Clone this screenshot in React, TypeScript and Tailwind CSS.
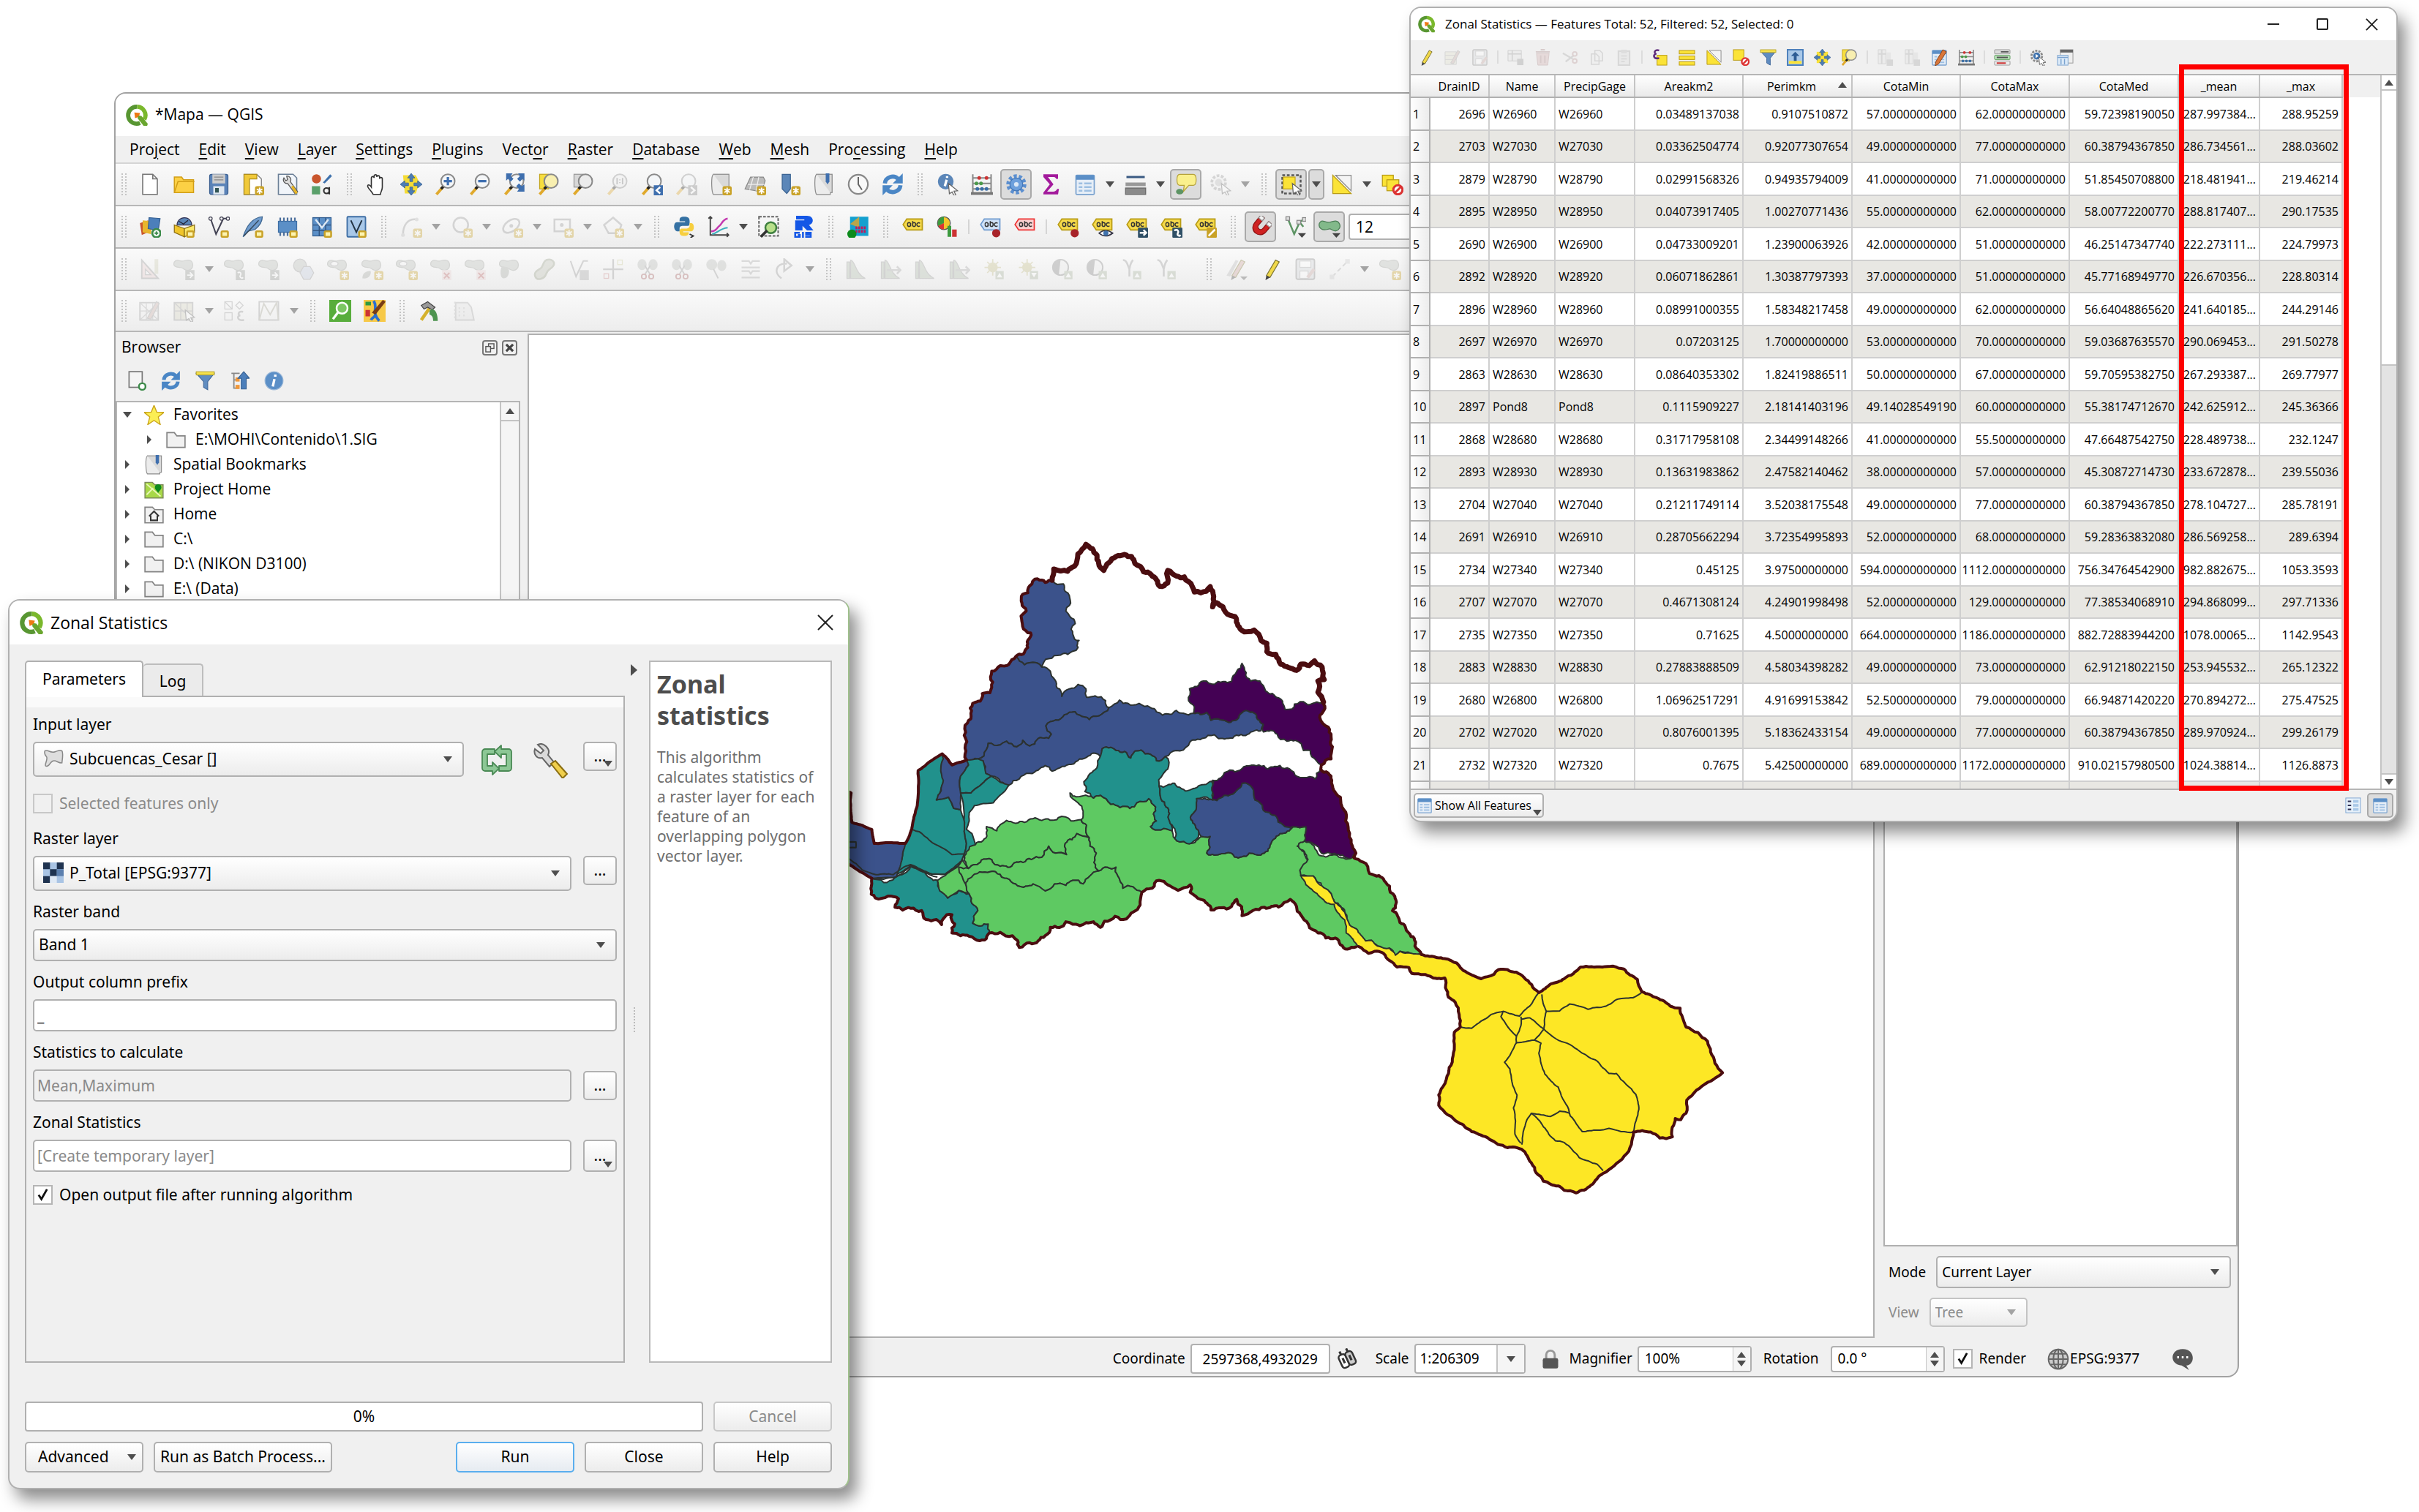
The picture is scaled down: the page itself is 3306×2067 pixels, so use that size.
import React from "react";

type Pt = [number, number];

/* ---------- Icons (24 x 24 grid) ---------- */

const gear = (
  <g>
    <rect x="14" y="14" width="10" height="10" rx="2" fill="#c9a227" />
    <path d="M19 15.5v7M16 17.2l6 3.6M22 17.2l-6 3.6" stroke="#fff" strokeWidth="1.5" />
  </g>
);
const plain = (
  <g>
    <rect x="14" y="16" width="9" height="8" rx="2" fill="#c9a227" />
    <rect x="16" y="18" width="5" height="4" fill="#fdf4b0" />
  </g>
);
const lens = (fill: string) => (
  <g>
    <path d="M2 23l7-8" stroke="#e0a92c" strokeWidth="3" />
    <path d="M7 17l3-3" stroke="#222" strokeWidth="3" />
    <circle cx="14.5" cy="8.5" r="7.5" fill={fill} stroke="#8a8a8a" strokeWidth="1.6" />
  </g>
);
const blob = <path d="M1 4c3-4 6 0 10-1s9-2 10 3-3 8-7 7-3-3-7-3S-1 9 1 4z" fill="#bcbfba" stroke="#9a9d98" />;
const tag = (fill: string, stroke: string) => (
  <g>
    <path d="M1 9.500l4-6h17v12H5z" fill={fill} stroke={stroke} strokeWidth="1.4" />
    <path d="M6 9.500a1.600 1.600 0 1 0 3 0a1.600 1.600 0 1 0-3 0M9.200 8v3.500M11.500 5.800v5.400M11.500 9.500a1.600 1.600 0 1 0 3 0a1.600 1.600 0 1 0-3 0M19.500 8.300a2 2 0 1 0 0 2.600" fill="none" stroke="#333" strokeWidth="1.200" />
  </g>
);
const pencil = (c: string) => (
  <g>
    <path d="M7 19L17 2l4 2-10 17z" fill={c} stroke="#7d7433" />
    <path d="M7 19l4 2-5 3z" fill="#444" />
  </g>
);
const cursor = <path d="M13 11l10 8-4 .5 2 4-2 .8-2-4-3 2z" fill="#fff" stroke="#666" strokeWidth="1" />;
const scissors = (
  <g>
    <ellipse cx="6" cy="7" rx="5" ry="6" fill="#b9bcb8" />
    <ellipse cx="18" cy="7" rx="5" ry="6" fill="#b9bcb8" />
    <path d="M9 8l6 10M15 8L9 18" stroke="#999" strokeWidth="1.500" />
    <circle cx="8" cy="20" r="2.500" fill="none" stroke="#a66" strokeWidth="1.500" />
    <circle cx="16" cy="20" r="2.500" fill="none" stroke="#a66" strokeWidth="1.500" />
  </g>
);
const histogram = <path d="M2 22V4h3v18zM6 22V2c5 0 5 15 16 20z" fill="#b3bfae" stroke="#999" />;
const tableSheet = (
  <g>
    <rect x="2" y="2" width="20" height="21" rx="1" fill="#e6eef7" stroke="#7ba3cf" strokeWidth="1.400" />
    <rect x="2" y="2" width="20" height="5" fill="#5b8fc7" />
    <path d="M5 11h4M11 11h8M5 15h4M11 15h8M5 19h4M11 19h8" stroke="#9dbfe2" strokeWidth="2" />
  </g>
);
const arrows4 = (
  <path d="M12 0l4 5h-2.500v4h-3V5H8zM12 24l4-5h-2.500v-4h-3v4H8zM0 12l5-4v2.500h4v3H5V16zM24 12l-5-4v2.500h-4v3h4V16z" fill="#4d7db5" stroke="#355f92" strokeWidth=".6" />
);
const abacus = (
  <g>
    <path d="M2 1v20M22 1v20M2 5h20M2 11h20M2 17h20" stroke="#888" strokeWidth="1.600" />
    <path d="M0 22h24" stroke="#777" strokeWidth="3" />
    <g fill="#c33"><circle cx="9" cy="5" r="2" /><circle cx="17" cy="5" r="2" /></g>
    <g fill="#4a9a4a"><circle cx="6" cy="11" r="2" /><circle cx="11" cy="11" r="2" /></g>
    <g fill="#3a6ea5"><circle cx="7" cy="17" r="2" /><circle cx="12" cy="17" r="2" /><circle cx="17" cy="17" r="2" /></g>
  </g>
);
const refresh = (
  <g fill="none" stroke="#4a86c5" strokeWidth="4.500">
    <path d="M3.500 11a8.500 8 0 0 1 14.500-5M20.500 13a8.500 8 0 0 1-14.500 5" />
    <path d="M23 0v11H12zM1 24V13h11z" fill="#4a86c5" stroke="none" />
  </g>
);
const funnel = (
  <g>
    <path d="M1 3h22l-8 10v10l-5-3v-7z" fill="#5f8cc0" stroke="#41699b" />
    <rect x="1" y="1" width="22" height="4" fill="#f4e04d" stroke="#b29e20" strokeWidth=".8" />
  </g>
);
const mapGrid = (
  <g>
    <rect x="2" y="2" width="20" height="20" fill="#5b8fc7" stroke="#335f92" />
    <path d="M2 10h20M2 16h20M9 2v20M16 2v20" stroke="#2d4e78" />
    <path d="M5 4l7 9 7-9" stroke="#dde8f4" strokeWidth="2" fill="none" />
  </g>
);
const noEntry = (
  <g>
    <circle cx="18" cy="18" r="5" fill="#fff" stroke="#d33" strokeWidth="2.400" />
    <path d="M15 21l6-6" stroke="#d33" strokeWidth="2.400" />
  </g>
);
const book = (
  <g>
    <rect x="4" y="1" width="17" height="20" fill="#d9d9d9" stroke="#8b8b8b" />
    <path d="M4 1c-3 2-2 20 0 22h15v-2" fill="#ececec" stroke="#8b8b8b" />
  </g>
);
const magicTri = (
  <g>
    <path d="M2 2v20h20z" fill="#fbe337" stroke="#b89b15" />
    <path d="M5 2h17v17z" fill="#f4f4f4" stroke="#8a8a8a" />
  </g>
);

const ICONS: Record<string, React.ReactNode> = {
  newFile: <path d="M4 1h11l5 5v17H4zM15 1v5h5" fill="#fff" stroke="#777" strokeWidth="1.300" />,
  open: <path d="M1 21V4h8l2 3h11v14zM1 21L5 9h18" fill="#fcd045" stroke="#d29e16" strokeWidth="1.200" />,
  save: (
    <g>
      <rect x="2" y="1" width="20" height="22" rx="2" fill="#5b83b8" stroke="#3b5f90" />
      <rect x="5" y="1" width="14" height="10" fill="#ccc" />
      <path d="M7 4h10M7 7h10" stroke="#888" />
      <rect x="6" y="14" width="12" height="9" fill="#dfe7f0" />
      <rect x="8" y="16" width="4" height="5" fill="#355" />
    </g>
  ),
  layout: (
    <g>
      <path d="M2 1h14l5 5v17H2z" fill="#fff" stroke="#777" />
      <path d="M2 1h14v5H8v17H2z" fill="#f0c93a" stroke="#b08f1c" />
      {gear}
    </g>
  ),
  layoutManager: (
    <g>
      <path d="M2 1h16l4 4v18H2z" fill="#f1f5fa" stroke="#6b7f96" strokeWidth="1.300" />
      <path d="M8 5a4 4 0 0 0 4 6l8 11 3-2-8-11a4 4 0 0 0-4-6l1 4-2 1z" fill="#ddd" stroke="#555" />
      <path d="M16 15l5 8 2-2-5-8z" fill="#e6b422" />
    </g>
  ),
  style: (
    <g>
      <circle cx="6" cy="6" r="5" fill="#c9552c" />
      <path d="M13 10l8-9 2 2-8 8z" fill="#3f72ad" />
      <rect x="1" y="14" width="9" height="9" fill="#5aa06a" />
      <path d="M20 23v-8M20 19a3 3 0 1 0-6 0a3 3 0 1 0 6 0" fill="none" stroke="#333" strokeWidth="1.700" />
    </g>
  ),
  hand: (
    <path d="M8 23c-2-4-6-7-6-9s2-2 4 1V5c0-2 3-2 3 0V3c0-2 3-2 3 0v1c0-2 3-2 3 0v2c0-2 3-2 3 0v9c0 4-2 5-2 8z" fill="#fff" stroke="#333" strokeWidth="1.300" />
  ),
  pan: (<g><path d="M3 2h14l4 8-4 12H5z" fill="#f5dc35" />{arrows4}</g>),
  zoomIn: (<g>{lens("#f4f6f8")}<path d="M10 8.500h9M14.500 4v9" stroke="#3f6fb0" strokeWidth="2.600" /></g>),
  zoomOut: (<g>{lens("#f4f6f8")}<path d="M10 8.500h9" stroke="#3f6fb0" strokeWidth="2.600" /></g>),
  zoomFull: (<g>{lens("#f4f6f8")}<path d="M3 0h7L8 3l3 3-3 3-3-3-2 2zM23 0h-7l2 3-3 3 3 3 3-3 2 2zM23 20h-8l2-3-3-3 3-3 3 3 3-2z" fill="#3f6fae" /></g>),
  zoomSel: (<g><rect x="2" y="1" width="10" height="16" fill="#f7de3e" stroke="#c5a71c" />{lens("#f8efb0")}</g>),
  zoomLayer: (<g><rect x="2" y="1" width="10" height="14" fill="#d8d8d8" stroke="#999" />{lens("#ececec")}</g>),
  zoomNative: (<g>{lens("#eee")}<path d="M11.500 5v7M17.500 5v7M14.500 6.500v1M14.500 9.500v1" stroke="#777" strokeWidth="1.500" /></g>),
  zoomLast: (<g>{lens("#f4f6f8")}<rect x="14" y="13" width="10" height="11" fill="#3f6fae" /><path d="M21 15l-4 3.500 4 3.500" stroke="#fff" strokeWidth="2" fill="none" /></g>),
  zoomNext: (<g>{lens("#f4f6f8")}<rect x="14" y="13" width="10" height="11" fill="#888" /><path d="M17 15l4 3.500-4 3.500" stroke="#fff" strokeWidth="2" fill="none" /></g>),
  newMap: (<g>{book}{gear}</g>),
  new3d: (<g><path d="M1 17L7 4h14l2 4-4 12z" fill="#bbb" stroke="#888" /><path d="M4 12h18M10 4L6 18M16 4l-3 15" stroke="#eee" />{gear}</g>),
  newBookmark: (<g><path d="M4 1h9v16l-4 5-5-5z" fill="#5b86b8" stroke="#3c6493" />{gear}</g>),
  bookmark: (<g>{book}<path d="M14 0h4v9l-2 3-2-3z" fill="#3f6fae" /></g>),
  clock: (<g><circle cx="12" cy="12" r="10.500" fill="#f8f8f8" stroke="#888" strokeWidth="1.800" /><path d="M12 4v8l4 6" fill="none" stroke="#666" strokeWidth="1.600" /></g>),
  refresh,
  identify: (<g><circle cx="10" cy="9" r="8.500" fill="#5b86b8" /><path d="M11 7l-2 7M11.500 3v2" stroke="#fff" strokeWidth="2.600" />{cursor}</g>),
  abacus,
  cog: (
    <g>
      <circle cx="12" cy="12" r="8.500" fill="none" stroke="#5b8fd0" strokeWidth="5" strokeDasharray="3.200 2.100" />
      <circle cx="12" cy="12" r="7" fill="#6ea0dc" stroke="#4377b8" />
      <circle cx="12" cy="12" r="2.500" fill="#dce8f6" />
    </g>
  ),
  sigma: <path d="M4 1h16v5h-2c-1-2-2-2-4-2H9l6 8-7 8h6c3 0 4-1 5-3h2l-1 6H4v-2l7-9-7-8z" fill="#a31b9c" />,
  table: tableSheet,
  measure: (<g><path d="M2 4h20" stroke="#3a5a82" strokeWidth="2.500" /><rect x="1" y="10" width="22" height="4" fill="#999" /><rect x="1" y="16" width="22" height="7" fill="#8a8a8a" stroke="#666" /></g>),
  tip: (<g><path d="M5 1h15c4 0 4 12 0 12h-5l-6 7 1-7H5c-4 0-4-12 0-12z" fill="#faf08c" stroke="#b5a23a" /><ellipse cx="5" cy="20" rx="4" ry="3" fill="#5d9464" /></g>),
  cogRun: (<g><circle cx="10" cy="10" r="7.500" fill="#eee" stroke="#999" strokeWidth="3" strokeDasharray="3 1.700" /><circle cx="10" cy="10" r="4" fill="#bbb" />{cursor}</g>),
  cogRunBlue: (<g><circle cx="10" cy="10" r="7.500" fill="#eee" stroke="#8a8a8a" strokeWidth="3" strokeDasharray="3 1.700" /><circle cx="10" cy="10" r="5" fill="#3f72ad" /><path d="M8.500 7v6l4-3z" fill="#fff" />{cursor}</g>),
  select: (<g><rect x="2" y="2" width="20" height="20" fill="none" stroke="#555" strokeWidth="2" strokeDasharray="3 2" /><rect x="3" y="4" width="13" height="13" fill="#fbe337" stroke="#c5a71c" />{cursor}</g>),
  magicTri,
  deselect: (<g><rect x="1" y="2" width="12" height="12" fill="#fbe337" stroke="#b89b15" /><rect x="6" y="7" width="13" height="12" fill="#fbe337" stroke="#b89b15" />{noEntry}</g>),
  deselectOne: (<g><rect x="1" y="1" width="15" height="15" fill="#fbe337" stroke="#b89b15" />{noEntry}</g>),
  dataSource: (<g><path d="M1 8l9-3v13l-7 3z" fill="#c9552c" /><path d="M4 5l10 1-1 14-9-2z" fill="#e8b52c" /><path d="M11 2l12 1-2 13-11-2z" fill="#4c7fbb" stroke="#345f92" /><circle cx="19" cy="19" r="4.500" fill="#fff" stroke="#3d8b4a" strokeWidth="2.200" /><path d="M19 17v4M17 19h4" stroke="#3d8b4a" strokeWidth="1.500" /></g>),
  geopackage: (<g><path d="M4 10a8 8 0 0 1 16 0z" fill="#5b86b8" stroke="#335" /><path d="M1 10l11 4v9L1 18z" fill="#f0c52b" stroke="#8a6d10" /><path d="M23 10l-11 4v9l11-5z" fill="#fbe869" stroke="#8a6d10" /><path d="M6 6l5 3 5-4" stroke="#223" fill="none" />{plain}</g>),
  shapefile: (<g><path d="M3 3l6 17 8-17h5" fill="none" stroke="#445" strokeWidth="1.600" /><g fill="#fff" stroke="#445"><circle cx="3" cy="3" r="1.800" /><circle cx="15" cy="3" r="1.800" /><circle cx="22" cy="3" r="1.800" /></g>{plain}</g>),
  feather: (<g><path d="M1 23C5 10 12 2 22 1c0 6-3 10-8 14l-8 2z" fill="#6f9bcc" stroke="#3d658f" /><path d="M2 22L18 5" stroke="#345" />{plain}</g>),
  memory: (<g><path d="M4 2v5M8 2v5M12 2v5M16 2v5M20 2v5M4 22v-5M8 22v-5M12 22v-5" stroke="#4c6f9c" strokeWidth="1.800" /><rect x="2" y="6" width="20" height="12" fill="#5b8fc7" stroke="#3f6fa5" />{plain}</g>),
  mesh: (<g>{mapGrid}{plain}</g>),
  virtual: (<g><rect x="2" y="1" width="20" height="22" rx="1" fill="#a9c8e8" stroke="#3f6fa5" strokeWidth="1.500" /><path d="M6 5l6 13 6-13" fill="none" stroke="#234" strokeWidth="1.500" />{plain}</g>),
  arc: (<g><path d="M3 21C3 9 9 3 18 4" fill="none" stroke="#999" strokeWidth="2" /><circle cx="3" cy="21" r="2" fill="#bbb" /><circle cx="18" cy="4" r="2" fill="#bbb" />{gear}</g>),
  circleD: (<g><circle cx="11" cy="10" r="8" fill="none" stroke="#999" strokeWidth="2" />{gear}</g>),
  ellipseD: (<g><ellipse cx="11" cy="11" rx="10" ry="6" transform="rotate(-35 11 11)" fill="none" stroke="#999" strokeWidth="2" /><circle cx="11" cy="11" r="2" fill="#999" />{gear}</g>),
  rectD: (<g><rect x="3" y="4" width="17" height="13" fill="none" stroke="#999" strokeWidth="2" /><circle cx="11" cy="10" r="2" fill="#999" />{gear}</g>),
  polyD: (<g><path d="M12 2l9 8-3 9H7L2 10z" fill="none" stroke="#999" strokeWidth="2" />{gear}</g>),
  python: (<g><path d="M12 1c-5 0-5 2-5 5h6v1H4c-4 0-4 9 0 10h3v-3c0-3 2-3 5-3h4c2 0 2-2 2-5 0-4-2-5-6-5z" fill="#3571a3" /><path d="M12 22c5 0 5-2 5-4h-6v-1h9c4-1 3-9 0-9h-2v3c0 2-2 3-4 3h-4c-3 0-3 2-3 4 0 3 2 4 5 4z" fill="#f7cf3f" /><path d="M18 20l4 2-3 2" stroke="#333" fill="none" strokeWidth="1.500" /></g>),
  plot: (<g><path d="M3 1v20h20M1 3l2-2 2 2M21 19l2 2-2 2" fill="none" stroke="#444" strokeWidth="1.500" /><path d="M4 17c6 0 6-4 9-6s3-7 9-8" fill="none" stroke="#c43ab0" strokeWidth="2" /><path d="M5 20c6-1 8-6 17-7" fill="none" stroke="#3db0bc" strokeWidth="1.800" /></g>),
  mapSearch: (<g><rect x="1" y="1" width="21" height="21" fill="#f6f6f6" stroke="#666" strokeDasharray="3 1.500" strokeWidth="1.600" /><circle cx="14" cy="13" r="6" fill="#b8e08a" stroke="#3f8040" strokeWidth="2" /><path d="M3 23l7-7" stroke="#333" strokeWidth="3" /></g>),
  rgis: (<g><path d="M4 0h12c8 0 8 9 2 10l5 6h-7l-5-5v5H3V5h10V4H4z" fill="#1457e6" /><path d="M8 18.500H3v4.500h5v-2H6M11.500 17.500V24M21 18.500h-6v2h5v2.500h-6" fill="none" stroke="#1457e6" strokeWidth="2" /></g>),
  cadastre: (<g><rect x="3" y="1" width="20" height="21" fill="#14a0cf" /><path d="M3 9l10-8v12z" fill="#b9a54a" /><path d="M9 13h12M9 17h12" stroke="#c2185b" strokeWidth="3" strokeDasharray="2 1" /><circle cx="5" cy="20" r="5" fill="#0d8a1c" /></g>),
  label: tag("#f6da4a", "#b89b15"),
  labelPie: (<g><circle cx="8" cy="8" r="7" fill="#f2c52c" stroke="#555" /><path d="M8 8V1a7 7 0 0 0-6 10z" fill="#3c9a3e" /><path d="M8 8l-6 3a7 7 0 0 0 6 4z" fill="#d33" /><rect x="12" y="11" width="4" height="12" fill="#3c9a3e" /><rect x="17" y="15" width="5" height="8" fill="#c33" /></g>),
  labelBlue: (<g>{tag("#cfe2f7", "#6f9bd0")}<circle cx="18" cy="19" r="4.500" fill="#a8242a" /></g>),
  labelRed: tag("#fbd0d0", "#e33"),
  labelPin: (<g>{tag("#f6da4a", "#b89b15")}<circle cx="19" cy="19" r="4.500" fill="#a8242a" /></g>),
  labelEye: (<g>{tag("#f6da4a", "#b89b15")}<path d="M8 19q7-6 15 0q-8 6-15 0z" fill="#fff" stroke="#334" strokeWidth="1.300" /><circle cx="15.500" cy="19" r="2.800" fill="#3f72ad" /></g>),
  labelMove: (<g>{tag("#f6da4a", "#b89b15")}<rect x="13" y="13" width="11" height="11" rx="1" fill="#2f4f66" /><path d="M15 18.500h7M19 15.500l3 3-3 3" stroke="#fff" strokeWidth="2" fill="none" /></g>),
  labelRotate: (<g>{tag("#f6da4a", "#b89b15")}<rect x="13" y="13" width="11" height="11" rx="1" fill="#2f4f66" /><path d="M15 16c4-2 5 1 4 3s1 4 3 2" stroke="#fff" strokeWidth="2" fill="none" /></g>),
  labelEdit: (<g>{tag("#f6da4a", "#b89b15")}<rect x="13" y="13" width="11" height="11" rx="1" fill="#c9a227" /><path d="M15 22l7-7" stroke="#fff" strokeWidth="2" /></g>),
  magnet: (<g transform="rotate(40 12 12)"><path d="M4 2h5v10a3 3 0 0 0 6 0V2h5v11a8 8 0 0 1-16 0z" fill="#cf2222" stroke="#8d1111" /><path d="M4 2h5v4H4zM15 2h5v4h-5z" fill="#f4f4f4" stroke="#999" /></g>),
  snapV: (<g><path d="M4 3l7 17 6-13M17 7l4-3M17 7l4 5" fill="none" stroke="#5d9464" strokeWidth="2" /><g fill="#ddd" stroke="#888"><rect x="2" y="1" width="4" height="4" /><rect x="14" y="5" width="4" height="4" /><rect x="20" y="2" width="4" height="4" /></g><path d="M15 19h9l-4.500 5z" fill="#444" /></g>),
  snapBlob: (<g><path d="M1 8c3-5 6 0 11-1s9-3 11 2-3 9-7 7-3-2-7-1-10-1-8-7z" fill="#82b98a" stroke="#4b7d55" /><path d="M15 19h9l-4.500 5z" fill="#444" /></g>),
  ruler: (<g><path d="M3 2v20h18z" fill="#e8cfcf" stroke="#999" strokeWidth="1.500" /><path d="M7 12v6h6z" fill="#f6f6f6" stroke="#999" /><rect x="17" y="1" width="4" height="16" fill="#cfcfb5" /></g>),
  blobMove: (<g>{blob}<rect x="13" y="13" width="10" height="11" fill="#9a9d98" /><path d="M15 18.500h6M18 15.500l3 3-3 3" stroke="#fff" strokeWidth="1.500" fill="none" /></g>),
  blobRotate: (<g>{blob}<rect x="13" y="13" width="10" height="11" fill="#9a9d98" /><path d="M15 16c4-2 4 2 3 3s1 4 3 2" stroke="#fff" strokeWidth="1.500" fill="none" /></g>),
  blobHex: (<g><circle cx="8" cy="8" r="7" fill="#bcbfba" stroke="#999" /><path d="M12 9h7l4 7-4 7h-7l-4-7z" fill="#c5cede" stroke="#999" /></g>),
  blobRing: (<g>{blob}<ellipse cx="8" cy="6" rx="4" ry="2.500" fill="#f6f6f6" stroke="#999" />{gear}</g>),
  blobPart: (<g>{blob}<path d="M1 22c0-6 4-8 9-8 1 4-2 9-9 8z" fill="#a9aca6" />{gear}</g>),
  blobGear: (<g>{blob}{gear}</g>),
  blobX: (<g>{blob}<rect x="13" y="13" width="10" height="11" fill="#e8d2d2" /><path d="M15 16l6 6M21 16l-6 6" stroke="#b66" strokeWidth="1.500" /></g>),
  blobFill: (<g>{blob}<path d="M3 9c3 0 8 1 8 5s-2 8-6 8-4-9-2-13z" fill="#a9aca6" /></g>),
  blobOffset: (<path d="M14 2c6-2 10 2 8 6s-6 3-8 9-10 8-12 3 3-7 6-9 2-7 6-9z" fill="#bfc2b5" stroke="#99a08a" strokeWidth="2" />),
  vertexS: (<g><path d="M3 3l6 17 8-17h5" fill="none" stroke="#999" strokeWidth="1.600" /><rect x="13" y="13" width="10" height="11" fill="#aaa" /></g>),
  crossEdge: (<g><path d="M12 1v22M1 12h22" stroke="#999" strokeWidth="1.800" /><rect x="2" y="17" width="5" height="5" fill="none" stroke="#c88" /><rect x="17" y="2" width="5" height="5" fill="none" stroke="#cc9" /></g>),
  scissors,
  mergeD: (<g><ellipse cx="7" cy="7" rx="6" ry="6" fill="#b9bcb8" /><ellipse cx="18" cy="8" rx="5" ry="6" fill="#b9bcb8" /><path d="M9 12l5 10" stroke="#999" strokeWidth="1.500" /></g>),
  mergeLines: <path d="M2 3h8l2 3 2-3h8M2 10h20M2 14h8l2 3 2-3h8M2 21h20" fill="none" stroke="#a9a9a9" strokeWidth="1.800" />,
  swirl: <path d="M8 22c-9-6-6-17 6-16M11 1l8 7-8 6z" fill="none" stroke="#999" strokeWidth="2" />,
  hist1: histogram,
  hist2: (<g>{histogram}<path d="M8 13h14M19 9l4 4-4 4" stroke="#aaa" strokeWidth="2" fill="none" /></g>),
  sunUp: (<g><circle cx="11" cy="10" r="5.500" fill="#c5bf8a" /><path d="M11 1v18M2 10h18M5 4l12 12M17 4L5 16" stroke="#c5bf8a" strokeWidth="1.400" /><rect x="14" y="14" width="9" height="9" fill="#aab5a0" /><path d="M18.500 16l3 5h-6z" fill="#fff" /></g>),
  sunDown: (<g><circle cx="11" cy="10" r="5.500" fill="#c5bf8a" /><path d="M11 1v18M2 10h18M5 4l12 12M17 4L5 16" stroke="#c5bf8a" strokeWidth="1.400" /><rect x="14" y="14" width="9" height="9" fill="#aab5a0" /><path d="M18.500 21l3-5h-6z" fill="#fff" /></g>),
  contrast: (<g><circle cx="10" cy="10" r="8.500" fill="#eee" stroke="#888" strokeWidth="1.500" /><path d="M10 1.500a8.500 8.500 0 0 0-2 16.800z" fill="#888" /><rect x="14" y="14" width="9" height="9" fill="#aab5a0" /><path d="M18.500 16l3 5h-6z" fill="#fff" /></g>),
  gammaUp: (<g><path d="M3 2c4 0 5 5 7 10 1-6 2-8 4-10M10 12v8" fill="none" stroke="#999" strokeWidth="2" /><rect x="14" y="14" width="9" height="9" fill="#aab5a0" /><path d="M18.500 16l3 5h-6z" fill="#fff" /></g>),
  pencils: (<g>{pencil("#cfa6a0")}<path d="M1 19L11 2l3 1L5 20z" fill="#bbb" /><path d="M16 20h8l-4 4z" fill="#555" /></g>),
  pencil: pencil("#f1d94a"),
  saveGrey: (<g><rect x="2" y="1" width="20" height="22" rx="2" fill="#d5d8dc" stroke="#888" strokeWidth="1.500" /><rect x="6" y="3" width="12" height="7" fill="#fff" stroke="#aaa" /><rect x="6" y="14" width="9" height="8" fill="#fff" stroke="#aaa" /><path d="M13 20l7-9 3 2-7 9z" fill="#c9a9a5" /></g>),
  lineDots: (<g><path d="M4 20L20 4" stroke="#aaa" strokeWidth="1.500" strokeDasharray="5 3" /><rect x="1" y="18" width="5" height="5" fill="#ccc" /><rect x="18" y="1" width="5" height="5" fill="#ccc" /></g>),
  gridEdit: (<g><rect x="1" y="3" width="20" height="19" fill="#f0f0f0" stroke="#999" strokeWidth="1.500" /><path d="M1 12h20M8 3v19M15 3v19M1 3l20 19M21 3L1 22" stroke="#aaa" /><path d="M9 20L19 2l3 2-9 17z" fill="#cbb0aa" stroke="#999" /></g>),
  gridSelect: (<g><rect x="1" y="3" width="20" height="19" fill="#d8d6c4" stroke="#999" strokeWidth="1.500" /><path d="M1 12h20M8 3v19M15 3v19M1 3l20 19" stroke="#999" />{cursor}</g>),
  gridE: (<g><rect x="1" y="2" width="8" height="8" fill="none" stroke="#999" /><path d="M1 2l8 8M13 6l4-4 4 4-4 4z" stroke="#999" fill="none" /><rect x="1" y="14" width="8" height="8" fill="none" stroke="#999" /><path d="M21 13c-6-1-6 4-3 4-4 0-4 6 4 5" fill="none" stroke="#999" strokeWidth="2" /></g>),
  gridV: (<g><rect x="1" y="2" width="21" height="20" fill="none" stroke="#999" strokeWidth="1.500" /><path d="M1 22L6 4l7 12 7-13 2 19" fill="none" stroke="#aaa99a" strokeWidth="1.500" /></g>),
  greenSearch: (<g><rect width="24" height="24" fill="#58ad3c" /><circle cx="14" cy="9" r="6" fill="#7cc764" stroke="#fff" strokeWidth="2" /><path d="M4 21l6-8" stroke="#fff" strokeWidth="2.600" /></g>),
  mapPen: (<g><rect width="24" height="24" fill="#f7c948" /><path d="M2 2h6v4H2z" fill="#2e9a3e" /><path d="M2 11h5v7H2z" fill="#c33" /><path d="M11 1c5 8-3 12 6 22M8 22c2-4 4-2 5-6" stroke="#2a6fd0" strokeWidth="3" fill="none" /><path d="M9 14L21 0l3 2-11 14z" fill="#7a3d14" /></g>),
  hammer: (<g><path d="M3 22l9-13" stroke="#d5b22d" strokeWidth="3.600" /><path d="M3 6l7-4 8 6-3 3-5-3-4 2z" fill="#999" stroke="#444" /><path d="M12 12c4-4 9 0 9 11h-5c0-4-1-6-4-7z" fill="#4e9450" /></g>),
  mapGrey: (<g><path d="M3 3h13l4 5 3 14H3z" fill="#e2e2e2" stroke="#aaa" strokeWidth="1.500" /><path d="M7 8v10M12 8v10M2 2v20" stroke="#bbb" strokeDasharray="2 2" strokeWidth="1.500" /></g>),
  addLayer: (<g><rect x="3" y="1" width="16" height="19" fill="#f4f4f4" stroke="#777" strokeWidth="1.500" /><circle cx="19" cy="19" r="4" fill="#fff" stroke="#3d8b4a" strokeWidth="2.200" /></g>),
  funnel,
  collapse: (<g><path d="M2 3h10M5 3v18h6M5 11h5" fill="none" stroke="#888" strokeWidth="1.600" /><rect x="7" y="8" width="5" height="5" fill="#f0973a" /><rect x="7" y="17" width="5" height="5" fill="#f0973a" /><path d="M17 1l7 8h-4v13h-6V9h-4z" fill="#4c7fbb" stroke="#345f92" /></g>),
  info: (<g><circle cx="12" cy="12" r="11" fill="#5b8fc7" stroke="#9cb9d8" /><path d="M12.500 10l-2 9M13.500 4.500v2.500" stroke="#fff" strokeWidth="3" /></g>),
  star: <path d="M12 0l3.300 8.300 8.700.4-6.800 5.600 2.400 9.200L12 18.400l-7.600 5.100 2.400-9.200L0 8.700l8.700-.4z" fill="#fbee54" stroke="#c9a31a" strokeWidth="1.200" />,
  folder: <path d="M1 21V3h9l3 4h10v14z" fill="#f1f1f1" stroke="#858585" strokeWidth="1.500" />,
  folderMap: (<g><path d="M1 22V3h9l3 3h10v16z" fill="#a8d848" stroke="#7d8a5c" strokeWidth="1.300" /><path d="M3 5l17 15M3 18l8-8" stroke="#e9f7b8" strokeWidth="1.600" /><path d="M13 9c0-5 8-5 8 0 0 3-3 4-4 7-1-3-4-4-4-7z" fill="#0e8a1e" /></g>),
  folderHome: (<g><path d="M1 22V3h9l3 3h10v16z" fill="#f1f1f1" stroke="#858585" strokeWidth="1.500" /><path d="M6 14l6-6 6 6M8 13v6h8v-6" fill="none" stroke="#333" strokeWidth="1.800" /></g>),
  tableEdit: (<g><path d="M1 4h16v18H1z" fill="#e4e2cf" stroke="#aaa" /><path d="M1 9h16M1 15h16" stroke="#aaa" /><path d="M9 20L19 2l3 2-9 17z" fill="#cbb0aa" stroke="#999" /></g>),
  tableAdd: (<g><path d="M1 2h19v15H1z" fill="#e5e5e5" stroke="#999" /><path d="M1 7h19M7 2v15" stroke="#999" strokeWidth="1.500" /><rect x="14" y="14" width="9" height="9" fill="#999" /></g>),
  trash: (<g><path d="M3 6h18l-2 17H5z" fill="#d6b4b4" stroke="#a88" /><path d="M2 4h20M9 1h6M9 9v11M15 9v11" stroke="#a88" strokeWidth="2" /></g>),
  cut: (<g><path d="M2 6l14 8M6 18l12-9" stroke="#aaa" strokeWidth="2.400" /><circle cx="19" cy="7" r="3" fill="none" stroke="#b99" strokeWidth="2" /><circle cx="19" cy="17" r="3" fill="none" stroke="#b99" strokeWidth="2" /></g>),
  copy: <path d="M9 2h7l4 4v11H9zM4 7h7l4 4v11H4z" fill="#eee" stroke="#aaa" strokeWidth="1.600" />,
  paste: (<g><rect x="4" y="3" width="16" height="20" fill="#ddd" stroke="#aaa" strokeWidth="2" /><rect x="8" y="1" width="8" height="5" fill="#bbb" /><path d="M8 10h8M8 14h8M8 18h5" stroke="#aaa" strokeWidth="1.500" /></g>),
  exprSelect: (<g><rect x="8" y="9" width="14" height="14" fill="#fbe337" stroke="#b89b15" /><path d="M11 2C4 0 3 6 7 7c-5 0-5 8 4 6" fill="none" stroke="#5d2a7a" strokeWidth="2.600" /></g>),
  selectAll: (<g fill="#fbe337" stroke="#b89b15"><rect x="1" y="2" width="22" height="5" /><rect x="1" y="10" width="22" height="5" /><rect x="1" y="18" width="22" height="5" /></g>),
  moveTop: (<g><rect x="1" y="1" width="22" height="22" fill="#a9c8e8" stroke="#4c7fbb" strokeWidth="2" /><rect x="3" y="17" width="18" height="4" fill="#fbe337" /><path d="M12 4l6 6h-4v7h-4v-7H6z" fill="#2d5c94" /></g>),
  panSel: (<g><rect x="4" y="4" width="16" height="16" fill="#fbe337" />{arrows4}</g>),
  colAdd: (<g><path d="M2 1h11v20H2z" fill="#e2e2e2" stroke="#aaa" /><path d="M7 1v20M2 7h11" stroke="#aaa" strokeWidth="2" /><rect x="14" y="5" width="6" height="14" fill="#d5d5d5" /><rect x="14" y="15" width="9" height="9" fill="#aaa" /></g>),
  tablePencil: (<g>{tableSheet}<path d="M7 18L17 1l5 3-11 17-5 3z" fill="#d9763a" stroke="#8a4318" /></g>),
  forms: (<g><rect x="1" y="1" width="22" height="6" rx="1" fill="#ddd" stroke="#999" /><rect x="1" y="9" width="22" height="6" rx="1" fill="#bfe5bf" stroke="#5fa05f" /><rect x="1" y="17" width="22" height="6" rx="1" fill="#eee" stroke="#999" /><path d="M10 4h11M4 12h16" stroke="#555" strokeWidth="2" /><path d="M4 20h13" stroke="#c33" strokeWidth="2" /></g>),
  dock: (<g><rect x="5" y="1" width="18" height="19" fill="#eee" stroke="#999" /><rect x="5" y="1" width="18" height="4" fill="#666" /><rect x="1" y="9" width="15" height="14" fill="#dceaf8" stroke="#7ba3cf" /><path d="M1 12h15M6 14v8M11 14v8" stroke="#7ba3cf" strokeWidth="1.500" /></g>),
  formView: (<g><rect x="1" y="1" width="22" height="22" fill="#e6f0fa" stroke="#7ba3cf" /><path d="M4 6h5M4 12h5M4 18h5" stroke="#335" strokeWidth="2" /><rect x="12" y="4" width="8" height="4" fill="#a9c8e8" /><rect x="12" y="10" width="8" height="4" fill="#a9c8e8" /><rect x="12" y="16" width="8" height="4" fill="#a9c8e8" /></g>),
  polygonLayer: <path d="M2 3c4-2 6 3 12 1s6-2 8-1c2 3 0 12 0 14-4 1-7-4-11-2s-3 6-7 6C0 21 6 13 4 10 2 8 1 6 2 3z" fill="#dedede" stroke="#888" strokeWidth="1.300" />,
  rasterLayer: (<g><rect width="24" height="24" fill="#a9c4e4" /><path d="M0 0h8v8H0zM8 8h8v8H8zM0 16h8v8H0zM16 0h8v8h-8z" fill="#1f3350" /><path d="M16 8h8v8h-8z" fill="#5b7fae" /><path d="M8 16h8v8H8z" fill="#dfe9f5" /></g>),
  cycle: (
    <g fill="#8cc795" stroke="#4a8a55" strokeWidth=".9" strokeLinejoin="round">
      <path d="M10.500 4.500v3.500H5.500v8H9V13.500l4.500 4.300L9 22v-2.500H4A2 2 0 0 1 2 17.500v-11a2 2 0 0 1 2-2z" />
      <path d="M13.500 19.500V16h5V8H15v2.500L10.500 6.200 15 2v2.500h5a2 2 0 0 1 2 2v11a2 2 0 0 1-2 2z" />
    </g>
  ),
  wrench: (<g><path d="M3 1c4-2 9 3 7 7l4 5-3 3-5-6C2 11 0 7 1 4l4 3 2-2z" fill="#d9d9d9" stroke="#666" /><path d="M12 14l3-2 8 9-3 3z" fill="#f0cf4c" stroke="#8a6d10" /></g>),
  tracker: (<g transform="rotate(-25 12 12)"><rect x="4" y="5" width="8" height="15" rx="3" fill="#fff" stroke="#333" strokeWidth="2" /><rect x="12" y="5" width="8" height="15" rx="3" fill="#ccc" stroke="#333" strokeWidth="2" /><path d="M8 5V1M16 5V1M8 9v6M16 9v6" stroke="#333" strokeWidth="2.500" /></g>),
  lock: (<g><path d="M7 12V7a5 5 0 0 1 10 0v5" fill="none" stroke="#999" strokeWidth="2.500" /><rect x="3" y="11" width="18" height="12" rx="2" fill="#555" /></g>),
  globe: (<g fill="none" stroke="#666" strokeWidth="1.500"><circle cx="12" cy="12" r="10" fill="#ccc" /><ellipse cx="12" cy="12" rx="5" ry="10" /><path d="M12 2v20M2 12h20M4 6.500h16M4 17.500h16" /></g>),
  chat: (<g><path d="M12 1c14 0 14 17 4 18l3 5-8-5C-3 18-2 1 12 1z" fill="#555" /><path d="M6 10h2M11 10h2M16 10h2" stroke="#fff" strokeWidth="2.500" /></g>),
};

function Icon({ name, className = "size-[30px]", dim }: { name: string; className?: string; dim?: boolean }) {
  return (
    <svg viewBox="0 0 24 24" fill="none" aria-hidden="true" className={`shrink-0 ${className} ${dim ? "opacity-35" : ""}`}>
      {ICONS[name]}
    </svg>
  );
}

function QgisLogo({ className }: { className: string }) {
  return (
    <svg viewBox="0 0 32 32" className={`shrink-0 ${className}`} fill="none" aria-hidden="true">
      <path d="M16 4a12 12 0 1 0 4 23" stroke="#589632" strokeWidth="6" />
      <path d="M16 4a12 12 0 0 1 10 18" stroke="#7ab82c" strokeWidth="6" />
      <path d="M16 16l6 1 9 11-1 3h-5l-8-10z" fill="#6aa62f" />
      <path d="M12 12l8 1-1 3-3 3-3 1z" fill="#ee7913" />
    </svg>
  );
}

/* ---------- Small shared parts ---------- */

function Caret({ dim, className = "" }: { dim?: boolean; className?: string }) {
  return (
    <svg viewBox="0 0 12 8" aria-hidden="true" className={`h-2 w-3 shrink-0 ${className}`}>
      <path d="M0 0h12L6 8z" fill={dim ? "#a3a3a3" : "#4d4d4d"} />
    </svg>
  );
}

function TreeArrow({ open }: { open?: boolean }) {
  return (
    <svg viewBox="0 0 12 12" aria-hidden="true" className="size-3 shrink-0">
      <path d={open ? "M0 2h12L6 10z" : "M3 0l6 6-6 6z"} fill="#4d4d4d" />
    </svg>
  );
}

const BTN = "border-2 border-[#b0b0b0] rounded-[5px] bg-linear-to-b from-white to-[#ececec]";

function Picker({ id, value, className, icon, dim }: { id: string; value: string; className: string; icon?: string; dim?: boolean }) {
  return (
    <div className={`relative ${className}`}>
      <select
        id={id}
        disabled={dim}
        defaultValue={value}
        className={`block size-full appearance-none border-2 rounded-[5px] bg-linear-to-b from-white to-[#ececec] ${dim ? "border-[#c4c4c4] text-[#8a8a8a]" : "border-[#b0b0b0]"} ${icon ? "pl-[48px]" : "pl-[6px]"}`}
      >
        <option>{value}</option>
      </select>
      {icon && <Icon name={icon} className="absolute left-[14px] top-[9px] size-[28px]" />}
      <Caret dim={dim} className="absolute right-4 top-1/2 -translate-y-1/2" />
    </div>
  );
}

function Dots({ menu, className, label }: { menu?: boolean; className: string; label: string }) {
  return (
    <button aria-label={label} className={`relative w-[46px] shrink-0 text-center ${BTN} ${className}`}>
      ...
      {menu && <Caret className="absolute bottom-1 right-1" />}
    </button>
  );
}

function Tick({ id, checked, dim, children }: { id: string; checked?: boolean; dim?: boolean; children: React.ReactNode }) {
  return (
    <label htmlFor={id} className={`flex items-center gap-[9px] ${dim ? "text-[#8a8a8a]" : ""}`}>
      <span className="relative grid size-[27px] place-items-center">
        <input id={id} type="checkbox" defaultChecked={checked} disabled={dim} className={`size-full appearance-none border-2 ${dim ? "border-[#c8c8c8] bg-[#f0f0f0]" : "border-[#b5b5b5] bg-white"}`} />
        {checked && (
          <svg viewBox="0 0 20 20" fill="none" aria-hidden="true" className="pointer-events-none absolute inset-1">
            <path d="M4 10l4 6 8-14" stroke="#111" strokeWidth="3" />
          </svg>
        )}
      </span>
      {children}
    </label>
  );
}

/* ---------- Toolbars ---------- */

/* "|" handle, "^" first handle, "v" menu arrow, "-" separator, "_" spacer; "!" prefix = disabled, "*" prefix = pressed */
const BAR_1 = "^ newFile open save layout layoutManager style | hand pan zoomIn zoomOut zoomFull zoomSel zoomLayer !zoomNative zoomLast !zoomNext newMap new3d newBookmark bookmark clock refresh | identify abacus *cog sigma table v measure v *tip !cogRun !v | *select *v magicTri v deselect";
const BAR_2 = "^ dataSource geopackage shapefile feather memory mesh virtual | !arc !v !circleD !v !ellipseD !v !rectD !v !polyD !v | python plot v mapSearch rgis | cadastre | label labelPie - labelBlue labelRed - labelPin labelEye labelMove labelRotate labelEdit | *magnet snapV *snapBlob";
const BAR_3 = "^ !ruler !blobMove !v !blobRotate !blobMove !blobHex !blobRing !blobPart !blobRing !blobX !blobX !blobFill !blobOffset !vertexS !crossEdge !scissors !scissors !mergeD !mergeLines !swirl !v | !hist1 !hist2 !hist1 !hist2 !sunUp !sunDown !contrast !contrast !gammaUp !gammaUp _ | !pencils pencil !saveGrey !lineDots !v !blobGear";
const BAR_4 = "^ !gridEdit !gridSelect !v !gridE !gridV !v | greenSearch mapPen | hammer !mapGrey";

function Grip({ first }: { first?: boolean }) {
  return (
    <span className={`grid shrink-0 place-items-center ${first ? "w-[23px]" : "w-7"}`}>
      <span className="h-[30px] w-[7px] border-x-2 border-dotted border-[#c4c4c4]" />
    </span>
  );
}

function Toolbar({ spec, tall, children }: { spec: string; tall?: boolean; children?: React.ReactNode }) {
  return (
    <div role="toolbar" className={`flex shrink-0 items-center overflow-hidden border-b-2 border-[#b7b7b7] bg-linear-to-b from-[#fafafa] to-[#ededed] ${tall ? "h-[58px]" : "h-[56px]"}`}>
      {spec.split(" ").map((token, i) => {
        const dim = token[0] === "!";
        const on = token[0] === "*";
        const name = dim || on ? token.slice(1) : token;
        if (name === "^" || name === "|") return <Grip key={i} first={name === "^"} />;
        if (name === "_") return <span key={i} className="w-[22px] shrink-0" />;
        if (name === "-") return <span key={i} className="mx-[5px] h-5 w-[2px] shrink-0 bg-[#d5d5d5]" />;
        if (name === "v")
          return (
            <button key={i} aria-label="More" className={`grid h-[42px] w-[22px] shrink-0 place-items-center rounded-[5px] ${on ? "border-2 border-[#a9a9a9] bg-[#dcdcdc]" : ""}`}>
              <Caret dim={dim} />
            </button>
          );
        return (
          <button
            key={i}
            aria-label={name}
            disabled={dim}
            className={`mx-[2px] grid h-[42px] w-[43px] shrink-0 place-items-center rounded-[5px] ${on ? "border-2 border-[#a9a9a9] bg-[#dcdcdc]" : ""}`}
          >
            <Icon name={name} dim={dim} />
          </button>
        );
      })}
      {children}
    </div>
  );
}

const MENU: [string, string, string][] = [
  ["Pro", "j", "ect"], ["", "E", "dit"], ["", "V", "iew"], ["", "L", "ayer"], ["", "S", "ettings"], ["", "P", "lugins"],
  ["Vect", "o", "r"], ["", "R", "aster"], ["", "D", "atabase"], ["", "W", "eb"], ["", "M", "esh"], ["Pro", "c", "essing"], ["", "H", "elp"],
];

/* ---------- Map ---------- */

const noise = (x: number, y: number) => {
  const s = Math.sin(x * 12.9898 + y * 78.233) * 43758.5453;
  return (s - Math.floor(s)) * 2 - 1;
};

/* Splits an edge into small jagged steps; both directions of an edge give the same line. */
function rough(a: Pt, b: Pt, amp: number): Pt[] {
  const flip = a[0] > b[0] || (a[0] === b[0] && a[1] > b[1]);
  const [p, q] = flip ? [b, a] : [a, b];
  const split = (s: Pt, e: Pt): Pt[] => {
    const dx = e[0] - s[0];
    const dy = e[1] - s[1];
    if (Math.hypot(dx, dy) < 5) return [s];
    const n = noise(s[0] + e[0], s[1] + e[1]) * amp;
    const m: Pt = [(s[0] + e[0]) / 2 - dy * n, (s[1] + e[1]) / 2 + dx * n];
    return [...split(s, m), ...split(m, e)];
  };
  const line = [...split(p, q), q];
  if (flip) line.reverse();
  return line.slice(0, -1);
}

function trace(src: string, sheet: "n" | "s", closed: boolean, amp = 0.2) {
  const pts = src.trim().split(/\s+/).map((t): Pt => {
    const [x, y] = t.split(",").map(Number);
    return sheet === "n" ? [1150 + x * 0.4719, 720 + y * 0.3827] : [1750 + x * 0.4082, 1100 + y * 0.3571];
  });
  const out: Pt[] = [];
  const count = closed ? pts.length : pts.length - 1;
  for (let i = 0; i < count; i++) out.push(...rough(pts[i], pts[(i + 1) % pts.length], amp));
  if (!closed) out.push(pts[pts.length - 1]);
  return "M" + out.map((p) => `${p[0].toFixed(1)} ${p[1].toFixed(1)}`).join("L") + (closed ? "Z" : "");
}

const BLUE = "#3b528b";
const TEAL = "#21918c";
const GREEN = "#5ec962";
const PURPLE = "#440154";
const YELLOW = "#fde725";

const BASINS: [string, "n" | "s", string, number?][] = [
  [BLUE, "n", "568,185 590,198 612,190 625,205 643,203 648,230 660,245 660,280 650,300 662,320 677,345 665,365 675,400 688,405 685,430 655,455 635,457 600,470 580,500 545,485 530,492 505,462 548,378 520,318 535,300 525,240 540,235 545,210"],
  [BLUE, "n", "505,462 530,492 545,485 580,500 605,515 618,545 625,575 638,605 660,578 685,562 708,578 710,608 735,603 765,620 775,645 745,675 718,688 690,672 660,662 635,685 605,695 592,710 608,740 600,755 575,752 560,775 545,782 525,762 508,785 478,765 460,778 425,772 420,795 395,828 362,832 358,790 365,700 380,630 402,622 408,595 430,592 435,515 460,495 485,490"],
  [BLUE, "n", "395,828 420,795 425,772 460,778 478,765 508,785 525,762 545,782 560,775 575,752 600,755 608,740 592,710 605,695 635,685 660,662 690,672 718,688 745,675 775,645 805,618 830,630 862,630 895,645 930,672 970,655 990,665 1020,665 1058,662 1070,690 1090,685 1122,698 1142,690 1155,668 1200,668 1210,690 1222,705 1215,728 1170,745 1120,755 1080,742 1045,755 1018,760 1005,780 970,798 938,820 912,835 895,812 868,797 850,800 838,825 820,802 795,798 780,787 755,792 750,820 735,808 715,818 690,828 665,848 640,855 610,872 590,852 570,868 545,880 515,900 485,922 460,912 435,890 418,880 410,835"],
  [PURPLE, "n", "1160,487 1172,520 1185,550 1212,550 1228,585 1265,610 1285,652 1305,650 1312,632 1345,630 1396,625 1385,680 1410,715 1422,785 1418,828 1390,850 1362,820 1358,798 1338,798 1315,762 1290,765 1262,740 1222,732 1222,705 1210,690 1200,668 1155,668 1142,690 1122,698 1090,685 1070,690 1058,662 1020,665 1018,635 1005,620 1008,578 1030,570 1048,550 1080,562 1105,552 1130,552 1145,515"],
  [TEAL, "n", "222,870 260,835 292,810 295,828 288,860 295,905 275,975 310,965 325,1005 345,1010 355,1045 362,1130 355,1170 340,1210 300,1240 262,1240 200,1210 160,1240 185,1130 205,1070 222,960", 0.05],
  [BLUE, "n", "295,828 292,810 320,850 362,832 368,850 345,890 342,920 345,1010 325,1005 310,965 275,975 295,905 288,860", 0.08],
  [TEAL, "n", "362,832 395,828 410,835 418,880 435,890 400,925 375,950 345,950 342,920 345,890 368,850", 0.05],
  [TEAL, "n", "345,950 375,950 400,925 435,890 460,912 485,922 450,970 440,985 410,988 385,995 370,1020 370,1050 362,1080 378,1095 388,1135 362,1170 355,1190 355,1170 362,1130 355,1045", 0.05],
  [BLUE, "n", "0,930 28,950 30,1055 88,1080 95,1130 185,1130 160,1250 88,1255 22,1205 0,1190", 0.04],
  [TEAL, "n", "88,1255 155,1252 200,1212 278,1262 285,1300 308,1325 340,1298 370,1310 378,1345 395,1370 380,1415 425,1418 428,1450 415,1475 400,1478 370,1462 345,1460 320,1450 320,1385 305,1385 290,1420 275,1402 245,1402 232,1370 200,1362 155,1358 165,1328 135,1318 98,1325"],
  [GREEN, "n", "278,1262 300,1245 335,1215 350,1190 368,1220 362,1285 370,1310 340,1298 308,1325 285,1300", 0.05],
  [GREEN, "n", "355,1190 362,1160 388,1135 410,1120 420,1070 450,1085 478,1048 530,1055 580,1048 628,1038 665,1050 695,1045 710,1065 718,1110 682,1095 648,1130 652,1170 620,1165 600,1140 580,1180 550,1188 500,1200 460,1212 435,1188 405,1190 368,1220"],
  [GREEN, "n", "405,1190 435,1188 460,1212 500,1200 550,1188 580,1180 600,1140 620,1165 652,1170 648,1130 682,1095 718,1110 720,1140 738,1165 745,1228 700,1275 670,1262 650,1280 590,1300 560,1295 555,1275 510,1282 400,1232 390,1240 365,1285 350,1250 340,1215 368,1220"],
  [GREEN, "n", "400,1232 510,1282 555,1275 590,1300 650,1280 670,1262 700,1275 745,1228 770,1215 795,1215 800,1245 815,1290 870,1305 865,1350 845,1375 825,1400 762,1408 750,1430 730,1410 650,1410 605,1430 590,1460 545,1485 515,1502 495,1460 460,1448 428,1450 425,1418 380,1415 395,1370 378,1345 370,1310 362,1285 385,1240"],
  [GREEN, "n", "662,950 700,960 730,968 750,958 780,990 835,1005 855,985 890,970 910,1000 912,1050 895,1070 925,1082 958,1085 965,1112 1000,1130 1042,1105 1068,1105 1058,1165 1080,1172 1160,1178 1240,1145 1270,1095 1308,1070 1345,1070 1342,1100 1342,1122 1320,1140 1350,1190 1330,1245 1370,1275 1425,1335 1465,1400 1485,1450 1510,1490 1490,1500 1465,1508 1430,1468 1380,1450 1330,1385 1300,1330 1225,1358 1160,1388 1145,1330 1130,1355 1070,1368 1040,1330 1010,1305 1010,1278 975,1298 945,1278 920,1262 900,1290 870,1305 815,1290 800,1245 795,1215 770,1215 745,1228 738,1165 720,1140 718,1110 710,1065 695,1045 700,1015 685,985"],
  [TEAL, "n", "755,792 780,787 795,798 820,802 838,825 850,800 868,797 895,812 912,835 938,820 945,865 930,885 920,925 925,970 940,1000 950,1050 958,1085 925,1082 895,1070 912,1050 910,1000 890,970 855,985 835,1005 780,990 750,958 730,968 705,945 702,910 720,880 740,860 742,835"],
  [TEAL, "n", "920,925 965,915 985,935 1030,930 1050,920 1072,908 1075,975 1040,968 1028,985 1012,1045 1035,1090 1025,1118 1000,1130 965,1112 950,1050 940,1000 925,970"],
  [BLUE, "n", "1028,970 1075,975 1120,960 1145,940 1160,915 1192,935 1198,975 1220,1005 1260,1035 1308,1070 1270,1095 1240,1145 1160,1178 1080,1172 1058,1165 1068,1105 1042,1105 1035,1090 1012,1045 1028,985"],
  [GREEN, "s", "80,138 105,150 125,185 180,190 245,200 275,218 298,262 330,270 365,310 383,350 375,405 400,450 430,490 450,540 472,572 400,560 385,575 365,548 325,540 305,518 285,520 255,475 232,460 215,410 180,370 170,340 120,290 110,272 68,270 65,250 92,208 60,155"],
  [PURPLE, "n", "1075,905 1100,895 1125,868 1180,853 1235,865 1255,855 1310,875 1372,900 1388,865 1420,905 1445,965 1455,1010 1460,1050 1480,1140 1490,1165 1480,1180 1440,1170 1390,1165 1365,1130 1342,1122 1342,1100 1345,1070 1308,1070 1260,1035 1220,1005 1198,975 1192,935 1160,915 1145,940 1120,960 1075,975"],
  [YELLOW, "s", "68,270 110,272 120,290 170,340 180,370 215,410 232,460 255,475 285,520 305,518 325,540 365,548 385,575 400,560 472,572 500,580 550,588 590,605 630,645 672,665 715,648 730,630 760,630 815,660 865,718 905,685 950,665 1005,620 1150,628 1195,668 1210,715 1260,738 1305,770 1338,778 1358,850 1430,905 1440,945 1480,1025 1450,1050 1430,1062 1360,1130 1358,1180 1340,1205 1322,1200 1312,1270 1270,1275 1240,1252 1182,1252 1175,1300 1150,1345 1080,1410 990,1485 950,1475 930,1458 880,1440 840,1370 808,1318 760,1312 700,1280 640,1250 595,1215 530,1150 530,1110 555,1050 578,960 582,870 602,850 585,755 562,735 550,662 500,655 440,645 430,622 390,620 345,568 315,560 295,568 262,542 220,490 215,440 190,410 180,380 155,375 110,330 85,305", 0.1],
];

const STREAMS: ["n" | "s", string][] = [
  ["n", "205,1080 225,1088 290,1145 320,1170 355,1168"],
  ["n", "0,1165 22,1185 60,1225 100,1242 150,1242 200,1206 262,1240 300,1240 345,1195"],
  ["n", "88,1255 155,1252 200,1212 278,1250"],
  ["n", "22,1125 42,1125 42,1145 22,1145"],
  ["s", "602,850 640,855 705,802 745,790 800,808 865,718"],
  ["s", "745,790 738,810 790,885 805,845 805,810"],
  ["s", "790,885 790,910 850,900 882,858 890,790 875,725"],
  ["s", "808,820 835,815 882,858 940,905 1010,950 1060,980 1100,1028 1125,1028 1190,1108 1200,1165 1182,1252"],
  ["s", "890,790 935,788 968,762 1030,782 1090,770 1120,748 1180,738 1212,715"],
  ["s", "790,910 750,985 768,1010 775,1060 792,1110 780,1160 785,1260 805,1295"],
  ["s", "850,900 872,912 865,950 885,1030 930,1080 965,1165 970,1190 1010,1250 1060,1245 1100,1238 1182,1252"],
  ["s", "808,1300 825,1205 840,1180 905,1192 935,1172 968,1180"],
  ["s", "840,1180 920,1285 950,1292 1000,1350 1060,1375 1080,1400"],
];

const RIM: ["n" | "s", string, number, number][] = [
  ["n", "612,190 590,198 568,185 545,210 540,235 525,240 535,300 520,318 548,378 505,462 485,490 460,495 435,515 430,592 408,595 402,622 380,630 365,700 358,790 362,832", 4, 0.2],
  ["n", "362,832 320,850 292,810 260,835 222,870 222,960 205,1070 185,1130 95,1130 88,1080 30,1055 28,950 0,930", 4, 0.05],
  ["n", "0,1190 22,1205 88,1255", 4, 0.05],
  ["n", "88,1255 98,1325 135,1318 165,1328 155,1358 200,1362 232,1370 245,1402 275,1402 290,1420 305,1385 320,1385 320,1450 345,1460 370,1462 400,1478 415,1475 428,1450 460,1448 495,1460 515,1502 545,1485 590,1460 605,1430 650,1410 730,1410 750,1430 762,1408 825,1400 845,1375 865,1350 870,1305 900,1290 920,1262 945,1278 975,1298 1010,1278 1010,1305 1040,1330 1070,1368 1130,1355 1145,1330 1160,1388 1225,1358 1300,1330 1330,1385 1380,1450 1430,1468 1465,1508 1490,1500", 4, 0.2],
  ["n", "1396,625 1385,680 1410,715 1422,785 1418,828 1390,850 1388,865 1420,905 1445,965 1455,1010 1460,1050 1480,1140 1490,1165 1485,1182", 4, 0.2],
  ["s", "245,200 275,218 298,262 330,270 365,310 383,350 375,405 400,450 430,490 450,540 472,572", 4, 0.2],
  ["s", "472,572 500,580 550,588 590,605 630,645 672,665 715,648 730,630 760,630 815,660 865,718 905,685 950,665 1005,620 1150,628 1195,668 1210,715 1260,738 1305,770 1338,778 1358,850 1430,905 1440,945 1480,1025 1450,1050 1430,1062 1360,1130 1358,1180 1340,1205 1322,1200 1312,1270 1270,1275 1240,1252 1182,1252 1175,1300 1150,1345 1080,1410 990,1485 950,1475 930,1458 880,1440 840,1370 808,1318 760,1312 700,1280 640,1250 595,1215 530,1150 530,1110 555,1050 578,960 582,870 602,850 585,755 562,735 550,662 500,655 440,645 430,622 390,620 345,568 315,560 295,568 262,542", 4, 0.1],
  ["n", "610,190 615,150 655,158 675,140 708,62 740,100 745,130 760,155 795,105 820,98 840,105 850,130 875,160 897,170 922,212 945,200 945,155 970,175 993,178 1005,195 1022,232 1040,235 1068,213 1075,285 1085,270 1105,285 1125,315 1140,320 1158,368 1195,368 1215,405 1232,415 1232,445 1258,455 1272,490 1318,512 1330,490 1355,495 1370,478 1392,500 1398,545 1380,550 1380,590 1396,625", 7, 0.16],
];

function MapCanvas() {
  return (
    <svg viewBox="723 458 1837 1368" role="img" aria-label="Map of sub-basins" className="absolute inset-0 size-full">
      <g stroke="#2c3230" strokeWidth="2" strokeLinejoin="round">
        {BASINS.map(([fill, sheet, pts, amp], i) => (
          <path key={i} d={trace(pts, sheet, true, amp)} fill={fill} />
        ))}
        {STREAMS.map(([sheet, pts], i) => (
          <path key={i} d={trace(pts, sheet, false, 0.06)} fill="none" />
        ))}
      </g>
      <g stroke="#4b0d10" fill="none" strokeLinejoin="round" strokeLinecap="round">
        {RIM.map(([sheet, pts, width, amp], i) => (
          <path key={i} d={trace(pts, sheet, false, amp)} strokeWidth={width} />
        ))}
      </g>
    </svg>
  );
}

/* ---------- Main window ---------- */

const TREE: [string, string, boolean?][] = [
  ["star", "Favorites"],
  ["folder", "E:\\MOHI\\Contenido\\1.SIG", true],
  ["bookmark", "Spatial Bookmarks"],
  ["folderMap", "Project Home"],
  ["folderHome", "Home"],
  ["folder", "C:\\"],
  ["folder", "D:\\ (NIKON D3100)"],
  ["folder", "E:\\ (Data)"],
];

function BrowserPanel() {
  return (
    <aside className="flex w-[553px] shrink-0 flex-col">
      <div className="flex h-[42px] items-center justify-between pl-2 pr-1">
        <h2 className="text-[21px]">Browser</h2>
        <div className="flex gap-[6px]">
          <button aria-label="Float panel" className="grid size-[21px] place-items-center rounded-[4px] border-2 border-[#777]">
            <svg viewBox="0 0 14 14" className="size-[13px]" fill="none" stroke="#555" strokeWidth="1.5"><rect x="5" y="1" width="8" height="7" /><rect x="1" y="5" width="7" height="8" fill="#f0f0f0" /></svg>
          </button>
          <button aria-label="Close panel" className="grid size-[21px] place-items-center rounded-[4px] border-2 border-[#777]">
            <svg viewBox="0 0 14 14" className="size-[13px]" stroke="#444" strokeWidth="3.500"><path d="M2 2l10 10M12 2L2 12" /></svg>
          </button>
        </div>
      </div>
      <div className="flex h-[52px] items-center gap-5 pb-1 pl-[15px]">
        {["addLayer", "refresh", "funnel", "collapse", "info"].map((n) => (
          <button key={n} aria-label={n}><Icon name={n} className="size-[27px]" /></button>
        ))}
      </div>
      <div className="flex flex-1 border-2 border-[#b5b5b5] bg-white">
        <ul className="flex-1">
          {TREE.map(([icon, text, child], i) => (
            <li key={text} className={`flex h-[34px] items-center ${child ? "pl-[38px]" : "pl-2"}`}>
              <TreeArrow open={i === 0} />
              <Icon name={icon} className="ml-[17px] size-[27px]" />
              <span className="ml-[13px] text-[21px]">{text}</span>
            </li>
          ))}
        </ul>
        <div className="w-[26px] border-l-2 border-[#c4c4c4] bg-[#f5f5f5]">
          <div className="grid h-[26px] place-items-center border-b-2 border-[#c4c4c4]"><Caret className="rotate-180" /></div>
        </div>
      </div>
    </aside>
  );
}

function Spin({ id, value }: { id: string; value: string }) {
  return (
    <div className="flex h-9 w-[156px] rounded-[4px] border-2 border-[#b0b0b0] bg-white">
      <input id={id} defaultValue={value} className="w-0 flex-1 pl-2" />
      <div className="flex w-6 flex-col items-center justify-center gap-1 border-l border-[#c4c4c4] bg-[#f5f5f5]">
        <Caret className="rotate-180" />
        <Caret />
      </div>
    </div>
  );
}

function StatusBar() {
  return (
    <footer className="flex h-[52px] shrink-0 items-center justify-end pr-[60px] pt-[5px] font-['Noto_Sans'] text-[19px]">
      <label htmlFor="coord" className="mr-[7px]">Coordinate</label>
      <input id="coord" defaultValue="2597368,4932029" className="h-[41px] w-[191px] rounded-[4px] border-2 border-[#b0b0b0] bg-white text-center" />
      <Icon name="tracker" className="ml-2 mr-6 size-[30px]" />
      <label htmlFor="scale" className="mr-[7px]">Scale</label>
      <div className="flex h-[41px] w-[152px] rounded-[4px] border-2 border-[#b0b0b0] bg-white">
        <input id="scale" defaultValue="1:206309" className="w-0 flex-1 pl-[6px]" />
        <button aria-label="Scale list" className="grid w-[38px] place-items-center border-l-2 border-[#c4c4c4] bg-[#f5f5f5]"><Caret /></button>
      </div>
      <Icon name="lock" className="ml-5 mr-3 size-[28px]" />
      <label htmlFor="magnifier" className="mr-[7px]">Magnifier</label>
      <Spin id="magnifier" value="100%" />
      <label htmlFor="rotation" className="ml-4 mr-[16px]">Rotation</label>
      <Spin id="rotation" value="0.0 °" />
      <div className="ml-[11px] mr-[28px]"><Tick id="render" checked>Render</Tick></div>
      <button className="flex items-center"><Icon name="globe" className="size-[32px]" />EPSG:9377</button>
      <button aria-label="Messages" className="ml-[44px]"><Icon name="chat" className="size-[30px]" /></button>
    </footer>
  );
}

function MainWindow() {
  return (
    <section className="absolute bottom-[184px] left-[156px] right-[246px] top-[126px] flex flex-col overflow-hidden rounded-tl-2xl rounded-br-2xl border-2 border-[#a2a2a2] bg-[#f0f0f0] font-['Open_Sans']">
      <header className="flex h-[58px] shrink-0 items-center gap-[9px] bg-white pl-[14px]">
        <QgisLogo className="size-[31px]" />
        <h1 className="text-[21px]">*Mapa — QGIS</h1>
      </header>
      <nav className="flex h-[38px] shrink-0 items-center border-b-2 border-[#d5d5d5] pl-[6px]">
        {MENU.map(([a, b, c]) => (
          <button key={a + b + c} className="px-[13px] text-[21px] leading-7">
            {a}<span className="underline underline-offset-4">{b}</span>{c}
          </button>
        ))}
      </nav>
      <Toolbar tall spec={BAR_1} />
      <Toolbar tall spec={BAR_2}>
        <input aria-label="Snapping tolerance" defaultValue="12" className="ml-[3px] h-9 w-[140px] shrink-0 rounded-[4px] border-2 border-[#b0b0b0] bg-white pl-2 text-[21px]" />
      </Toolbar>
      <Toolbar tall spec={BAR_3} />
      <Toolbar spec={BAR_4} />
      <div className="flex min-h-0 flex-1">
        <BrowserPanel />
        <main className="relative ml-[10px] mt-[2px] flex-1 overflow-hidden border-2 border-[#b0b0b0] bg-white">
          <MapCanvas />
        </main>
        <aside className="ml-[12px] flex w-[484px] flex-col font-['Noto_Sans'] text-[19px]">
          <div className="flex-1 border-2 border-[#b0b0b0] bg-white" />
          <div className="flex h-[70px] items-center gap-[14px] pl-[7px] pr-[9px]">
            <label htmlFor="mode">Mode</label>
            <Picker id="mode" value="Current Layer" className="h-[44px] flex-1" />
          </div>
          <div className="flex h-[55px] items-start gap-[14px] pl-[7px] text-[#8a8a8a]">
            <label htmlFor="view" className="pt-1 leading-8">View</label>
            <Picker id="view" value="Tree" className="h-[40px] w-[134px]" dim />
          </div>
        </aside>
      </div>
      <StatusBar />
    </section>
  );
}

/* ---------- Zonal statistics dialog ---------- */

const FIELD = "h-[44px] rounded-[5px] border-2 border-[#b0b0b0] px-1";

function Dialog() {
  return (
    <section className="absolute bottom-[31px] left-[11px] top-[819px] flex w-[1150px] flex-col overflow-hidden rounded-2xl border-2 border-r-[#9fc08c] border-[#b0b0b0] bg-[#f0f0f0] font-['Noto_Sans'] text-[21px] shadow-[10px_14px_22px_rgba(0,0,0,0.45)]">
      <header className="flex h-[60px] shrink-0 items-center bg-white pl-[14px] pr-[20px]">
        <QgisLogo className="size-[33px]" />
        <h2 className="ml-[9px] flex-1 font-['Open_Sans'] text-[23px]">Zonal Statistics</h2>
        <button aria-label="Close dialog">
          <svg viewBox="0 0 22 22" className="size-[22px]" stroke="#222" strokeWidth="2"><path d="M1 1l20 20M21 1L1 21" /></svg>
        </button>
      </header>
      <div className="flex min-h-0 flex-1 pl-[21px] pr-[22px] pt-[22px]">
        <div className="flex w-[820px] flex-col">
          <div role="tablist" className="flex h-[48px] shrink-0 items-end">
            <button role="tab" aria-selected="true" className="relative top-[2px] h-[50px] w-[162px] rounded-t-[5px] border-2 border-b-0 border-[#b0b0b0] bg-white">Parameters</button>
            <button role="tab" aria-selected="false" className="h-[44px] w-[82px] rounded-t-[5px] border-2 border-b-0 border-l-0 border-[#bdbdbd] bg-[#ebebeb] pt-1">Log</button>
          </div>
          <div className="flex-1 border-2 border-[#b0b0b0]">
            <div className="h-[14px] bg-[#fafafa]" />
            <div className="flex flex-col px-[9px] pt-2">
              <label htmlFor="input-layer" className="h-[39px] leading-[30px]">Input layer</label>
              <div className="flex items-start">
                <Picker id="input-layer" value="Subcuencas_Cesar []" icon="polygonLayer" className="h-[48px] w-[589px]" />
                <button aria-label="Iterate" className="ml-[21px] mt-px"><Icon name="cycle" className="size-[48px]" /></button>
                <button aria-label="Options" className="ml-[26px] mt-[2px]"><Icon name="wrench" className="size-[48px]" /></button>
                <Dots menu label="Input options" className="ml-auto h-[40px]" />
              </div>
              <div className="mt-[19px]"><Tick id="selected-only" dim>Selected features only</Tick></div>
              <label htmlFor="raster-layer" className="mt-[16px] h-[39px] leading-[30px]">Raster layer</label>
              <div className="flex items-start justify-between">
                <Picker id="raster-layer" value="P_Total [EPSG:9377]" icon="rasterLayer" className="h-[48px] w-[736px]" />
                <Dots label="Browse raster" className="h-[40px]" />
              </div>
              <label htmlFor="band" className="mt-[13px] h-[39px] leading-[30px]">Raster band</label>
              <Picker id="band" value="Band 1" className="h-[44px]" />
              <label htmlFor="prefix" className="mt-[13px] h-[39px] leading-[30px]">Output column prefix</label>
              <input id="prefix" defaultValue="_" className={`${FIELD} bg-white`} />
              <label htmlFor="stats" className="mt-[13px] h-[39px] leading-[30px]">Statistics to calculate</label>
              <div className="flex items-center justify-between">
                <input id="stats" readOnly value="Mean,Maximum" className={`${FIELD} w-[736px] text-[#8a8a8a]`} />
                <Dots label="Choose statistics" className="h-[40px]" />
              </div>
              <label htmlFor="output" className="mt-[13px] h-[39px] leading-[30px]">Zonal Statistics</label>
              <div className="flex items-center justify-between">
                <input id="output" placeholder="[Create temporary layer]" className={`${FIELD} w-[736px] bg-white placeholder:text-[#8a8a8a]`} />
                <Dots menu label="Output options" className="h-[44px]" />
              </div>
              <div className="mt-4"><Tick id="open-output" checked>Open output file after running algorithm</Tick></div>
            </div>
          </div>
        </div>
        <div className="flex w-[33px] flex-col items-center pr-2">
          <svg viewBox="0 0 10 18" className="mb-auto mt-1 h-[18px] w-[9px]"><path d="M0 0l10 9-10 9z" fill="#4d4d4d" /></svg>
          <span className="mb-auto h-[34px] border-l-2 border-dotted border-[#bbb]" />
        </div>
        <article className="flex-1 border-2 border-[#b9b9b9] bg-white pl-[9px] pr-1 pt-[9px]">
          <h3 className="text-[34px] font-bold leading-[43px] text-[#4d4d4d]">Zonal<br />statistics</h3>
          <p className="mt-[22px] whitespace-nowrap leading-[27px] text-[#6e6e6e]">
            This algorithm<br />calculates statistics of<br />a raster layer for each<br />feature of an<br />overlapping polygon<br />vector layer.
          </p>
        </article>
      </div>
      <footer className="shrink-0 pb-[21px] pl-[21px] pr-[22px] pt-[53px]">
        <div className="flex h-[41px] gap-[14px]">
          <div role="progressbar" aria-valuenow={0} aria-label="Progress" className="grid flex-1 place-items-center rounded-[4px] border-2 border-[#b0b0b0] bg-white">0%</div>
          <button disabled className="w-[162px] rounded-[5px] border-2 border-[#c8c8c8] bg-linear-to-b from-white to-[#ececec] text-[#8a8a8a]">Cancel</button>
        </div>
        <div className="mt-[14px] flex h-[42px] gap-[14px]">
          <button className={`flex w-[162px] items-center justify-between pl-4 pr-[8px] ${BTN}`}>Advanced<Caret /></button>
          <button className={`mr-auto w-[244px] whitespace-nowrap ${BTN}`}>Run as Batch Process...</button>
          <button className="w-[162px] rounded-[5px] border-2 border-[#5aaeee] bg-linear-to-b from-white to-[#e6ebf1]">Run</button>
          <button className={`w-[162px] ${BTN}`}>Close</button>
          <button className={`w-[162px] ${BTN}`}>Help</button>
        </div>
      </footer>
    </section>
  );
}

/* ---------- Attribute table window ---------- */

const z = ".00000000000";
const ROWS: string[][] = [
  ["2696", "W26960", "0.03489137038", "0.9107510872", "57" + z, "62" + z, "59.72398190050", "287.997384...", "288.95259"],
  ["2703", "W27030", "0.03362504774", "0.92077307654", "49" + z, "77" + z, "60.38794367850", "286.734561...", "288.03602"],
  ["2879", "W28790", "0.02991568326", "0.94935794009", "41" + z, "71" + z, "51.85450708800", "218.481941...", "219.46214"],
  ["2895", "W28950", "0.04073917405", "1.00270771436", "55" + z, "62" + z, "58.00772200770", "288.817407...", "290.17535"],
  ["2690", "W26900", "0.04733009201", "1.23900063926", "42" + z, "51" + z, "46.25147347740", "222.273111...", "224.79973"],
  ["2892", "W28920", "0.06071862861", "1.30387797393", "37" + z, "51" + z, "45.77168949770", "226.670356...", "228.80314"],
  ["2896", "W28960", "0.08991000355", "1.58348217458", "49" + z, "62" + z, "56.64048865620", "241.640185...", "244.29146"],
  ["2697", "W26970", "0.07203125", "1.70000000000", "53" + z, "70" + z, "59.03687635570", "290.069453...", "291.50278"],
  ["2863", "W28630", "0.08640353302", "1.82419886511", "50" + z, "67" + z, "59.70595382750", "267.293387...", "269.77977"],
  ["2897", "Pond8", "0.1115909227", "2.18141403196", "49.14028549190", "60" + z, "55.38174712670", "242.625912...", "245.36366"],
  ["2868", "W28680", "0.31717958108", "2.34499148266", "41" + z, "55.50000000000", "47.66487542750", "228.489738...", "232.1247"],
  ["2893", "W28930", "0.13631983862", "2.47582140462", "38" + z, "57" + z, "45.30872714730", "233.672878...", "239.55036"],
  ["2704", "W27040", "0.21211749114", "3.52038175548", "49" + z, "77" + z, "60.38794367850", "278.104727...", "285.78191"],
  ["2691", "W26910", "0.28705662294", "3.72354995893", "52" + z, "68" + z, "59.28363832080", "286.569258...", "289.6394"],
  ["2734", "W27340", "0.45125", "3.97500000000", "594" + z, "1112" + z, "756.34764542900", "982.882675...", "1053.3593"],
  ["2707", "W27070", "0.4671308124", "4.24901998498", "52" + z, "129" + z, "77.38534068910", "294.868099...", "297.71336"],
  ["2735", "W27350", "0.71625", "4.50000000000", "664" + z, "1186" + z, "882.72883944200", "1078.00065...", "1142.9543"],
  ["2883", "W28830", "0.27883888509", "4.58034398282", "49" + z, "73" + z, "62.91218022150", "253.945532...", "265.12322"],
  ["2680", "W26800", "1.06962517291", "4.91699153842", "52.50000000000", "79" + z, "66.94871420220", "270.894272...", "275.47525"],
  ["2702", "W27020", "0.8076001395", "5.18362433154", "49" + z, "77" + z, "60.38794367850", "289.970924...", "299.26179"],
  ["2732", "W27320", "0.7675", "5.42500000000", "689" + z, "1172" + z, "910.02157980500", "1024.38814...", "1126.8873"],
  ["", "", "", "", "", "", "", "", ""],
];

const HEADS = ["DrainID", "Name", "PrecipGage", "Areakm2", "Perimkm", "CotaMin", "CotaMax", "CotaMed", "_mean", "_max"];
const TABLE_BAR = "pencil !tableEdit !saveGrey - !tableAdd !trash !cut !copy !paste - exprSelect selectAll magicTri deselectOne funnel moveTop panSel zoomSel - !colAdd !colAdd tablePencil abacus - forms - cogRunBlue dock";

function AttributeWindow() {
  return (
    <section className="absolute right-[29px] top-[9px] flex h-[1115px] w-[1351px] flex-col overflow-hidden rounded-2xl border-2 border-[#b0b0b0] bg-[#f0f0f0] font-['Open_Sans'] text-[16px] shadow-[10px_14px_22px_rgba(0,0,0,0.45)]">
      <header className="flex h-[44px] shrink-0 items-center bg-white pl-[10px] pr-[25px]">
        <QgisLogo className="size-[24px]" />
        <h2 className="ml-[13px] flex-1 text-[17px]">Zonal Statistics — Features Total: 52, Filtered: 52, Selected: 0</h2>
        <div className="flex items-center gap-[51px]">
          <button aria-label="Minimize" className="grid size-4 items-center"><span className="block h-[2px] w-full bg-[#222]" /></button>
          <button aria-label="Maximize" className="size-[16px] rounded-[2px] border-2 border-[#222]" />
          <button aria-label="Close table">
            <svg viewBox="0 0 18 18" className="size-[17px]" stroke="#222" strokeWidth="2"><path d="M1 1l16 16M17 1L1 17" /></svg>
          </button>
        </div>
      </header>
      <div role="toolbar" className="flex h-[46px] shrink-0 items-center pl-[2px]">
        {TABLE_BAR.split(" ").map((t, i) => {
          if (t === "-") return <span key={i} className="mx-[5px] h-[18px] w-[2px] bg-[#dcdcdc]" />;
          const dim = t[0] === "!";
          const name = dim ? t.slice(1) : t;
          return (
            <button key={i} aria-label={name} disabled={dim} className="grid w-[37px] place-items-center">
              <Icon name={name} dim={dim} className="size-[23px]" />
            </button>
          );
        })}
      </div>
      <div className="flex min-h-0 flex-1 border-y-2 border-[#b5b5b5] bg-white">
        <div className="flex-1 overflow-hidden bg-linear-to-b from-[#f0f0f0] from-[30px] to-white to-[30px]">
          <table className="w-[1273px] table-fixed border-collapse">
            <colgroup>
              <col className="w-[26px]" /><col className="w-[81px]" /><col className="w-[90px]" /><col className="w-[109px]" />
              <col className="w-[148px]" /><col className="w-[149px]" /><col className="w-[148px]" /><col className="w-[149px]" />
              <col className="w-[149px]" /><col className="w-[111px]" /><col className="w-[113px]" />
            </colgroup>
            <thead>
              <tr className="h-[30px] bg-linear-to-b from-white to-[#e9e9e9]">
                <th aria-label="Row" className="border-b-2 border-[#b0b0b0]" />
                {HEADS.map((h) => (
                  <th key={h} className={`relative border-b-2 border-r-2 border-[#c4c4c4] border-b-[#b0b0b0] p-0 font-normal ${h === "Perimkm" ? "pr-4" : ""}`}>
                    {h}
                    {h === "Perimkm" && <Caret className="absolute right-[6px] top-[9px] rotate-180" />}
                  </th>
                ))}
              </tr>
            </thead>
            <tbody>
              {ROWS.map((r, i) => (
                <tr key={i} className={i % 2 ? "h-[44px] bg-[#e8e7e3]" : "h-[45px] bg-white"}>
                  <th scope="row" className="border-b-2 border-r-2 border-[#b0b0b0] bg-linear-to-r from-white to-[#ececec] p-0 pl-[3px] text-left font-normal">{r[0] && i + 1}</th>
                  {[r[0], r[1], r[1], ...r.slice(2)].map((c, j) => (
                    <td key={j} className={`whitespace-nowrap border-b-2 border-r-2 border-[#cfcfcf] p-0 ${j === 1 || j === 2 ? "pl-1" : "pr-1 text-right"}`}>{c}</td>
                  ))}
                </tr>
              ))}
            </tbody>
          </table>
        </div>
        <div className="flex w-[22px] flex-col border-l-2 border-[#c4c4c4] bg-[#e3e3e3]">
          <div className="grid h-[21px] place-items-center border-b-2 border-[#c4c4c4] bg-white"><Caret className="rotate-180" /></div>
          <div className="h-[376px] border-b-2 border-[#c4c4c4] bg-white" />
          <div className="mt-auto grid h-[21px] place-items-center border-t-2 border-[#c4c4c4] bg-white"><Caret /></div>
        </div>
      </div>
      <footer className="flex h-[42px] shrink-0 items-center pl-[4px] pr-[4px]">
        <button className={`relative flex h-[34px] w-[178px] items-center gap-[3px] whitespace-nowrap pl-[2px] text-[16px] ${BTN}`}>
          <Icon name="table" className="size-[22px]" />Show All Features
          <Caret className="absolute bottom-px right-px" />
        </button>
        <button aria-label="Form view" className="ml-auto mr-[8px]"><Icon name="formView" className="size-[22px]" /></button>
        <button aria-label="Table view" className="grid h-[34px] w-[36px] place-items-center rounded-[5px] border-2 border-[#a9a9a9] bg-[#dcdcdc]"><Icon name="table" className="size-[22px]" /></button>
      </footer>
    </section>
  );
}

export default function App() {
  return (
    <div className="relative h-screen w-full overflow-hidden bg-white text-black">
      <MainWindow />
      <Dialog />
      <AttributeWindow />
      <div className="pointer-events-none absolute right-[96px] top-[88px] h-[993px] w-[232px] border-[7px] border-[#fe0000]" />
    </div>
  );
}
